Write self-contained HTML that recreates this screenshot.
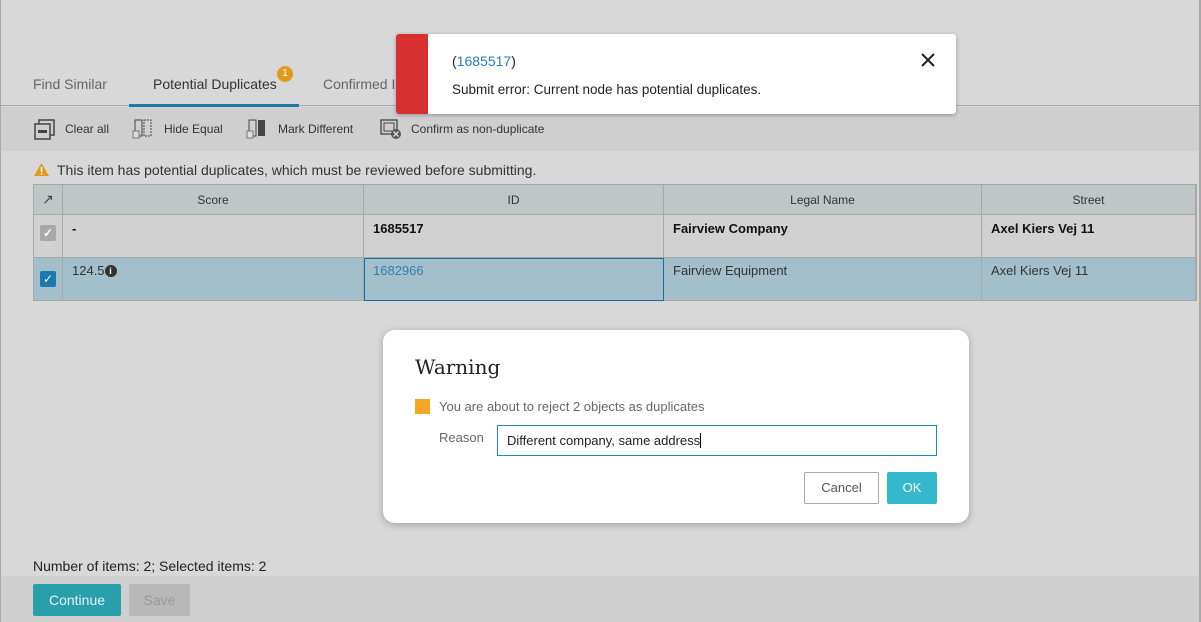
<!DOCTYPE html>
<html><head><meta charset="utf-8"><style>
*{box-sizing:border-box;margin:0;padding:0}
body{width:1201px;height:622px;overflow:hidden;background:#d8d8d8;font-family:"Liberation Sans",sans-serif;font-size:13px;color:#222;position:relative}
.abs{position:absolute}
.tab{position:absolute;top:76px;font-size:14px;color:#666}
.tb{position:absolute;top:122px;font-size:12px;color:#333}
table{border-collapse:collapse;position:absolute;left:33px;top:184px;width:1164px;table-layout:fixed}
td,th{border:1px solid #a8a8a8;vertical-align:top;font-size:13px}
th{background:#bfc6c8;font-weight:normal;height:30px;vertical-align:middle;font-size:12px;color:#333}
.r1 td{background:#d1d1d1;height:43px;padding:6px 9px;font-weight:bold;color:#111}
.r2 td{background:#a3bfcb;height:43px;padding:5px 9px;color:#333}
.cb{width:16px;height:16px;border-radius:2px;display:inline-block;color:#fff;font-size:12px;text-align:center;line-height:16px}
</style></head><body>
<div class="abs" style="left:0;top:0;width:1px;height:622px;background:#a8a8a8;z-index:5"></div>
<div class="abs" style="left:1199px;top:0;width:2px;height:622px;background:#a8a8a8;z-index:5"></div>
<div class="tab" style="left:33px">Find Similar</div>
<div class="tab" style="left:153px;color:#333">Potential Duplicates</div>
<div class="abs" style="left:277px;top:66px;width:16px;height:16px;border-radius:50%;background:#e09a1e;color:#fff;font-size:10px;text-align:center;line-height:16px">1</div>
<div class="tab" style="left:323px">Confirmed I</div>
<div class="abs" style="left:0;top:105px;width:1201px;height:1px;background:#aaa"></div>
<div class="abs" style="left:129px;top:104px;width:170px;height:3px;background:#1a7aa8"></div>
<div class="abs" style="left:0;top:107px;width:1201px;height:44px;background:#cfcfcf"></div>
<svg class="abs" style="left:34px;top:119px" width="22" height="22"><rect x="5" y="1" width="15" height="15" fill="none" stroke="#444" stroke-width="1.5"/><rect x="1" y="5" width="15" height="15" fill="#cfcfcf" stroke="#444" stroke-width="1.5"/><rect x="4" y="11" width="9" height="3" fill="#444"/></svg>
<div class="tb" style="left:65px">Clear all</div>
<svg class="abs" style="left:132px;top:119px" width="22" height="22"><rect x="3" y="1" width="7" height="16" fill="none" stroke="#444"/><rect x="12" y="1" width="7" height="16" fill="none" stroke="#444" stroke-dasharray="2 1"/><rect x="1" y="12" width="6" height="7" fill="#ddd" stroke="#777"/></svg>
<div class="tb" style="left:164px">Hide Equal</div>
<svg class="abs" style="left:246px;top:119px" width="22" height="22"><rect x="3" y="1" width="7" height="16" fill="none" stroke="#444"/><rect x="12" y="1" width="7" height="16" fill="#444"/><rect x="1" y="12" width="6" height="7" fill="#ddd" stroke="#777"/></svg>
<div class="tb" style="left:278px">Mark Different</div>
<svg class="abs" style="left:380px;top:119px" width="24" height="22"><rect x="1" y="1" width="16" height="14" fill="none" stroke="#444" stroke-width="1.3"/><rect x="4" y="4" width="10" height="8" fill="none" stroke="#444"/><circle cx="16" cy="15" r="5" fill="#555"/><path d="M13.5 12.5l5 5M18.5 12.5l-5 5" stroke="#ddd" stroke-width="1.3"/></svg>
<div class="tb" style="left:411px">Confirm as non-duplicate</div>
<svg class="abs" style="left:33px;top:162px" width="17" height="15"><path d="M8.5 1L16 14H1z" fill="#e09a1e"/><rect x="7.8" y="5" width="1.5" height="5" fill="#fff"/><rect x="7.8" y="11" width="1.5" height="1.5" fill="#fff"/></svg>
<div class="abs" style="left:57px;top:162px;font-size:14px;color:#333">This item has potential duplicates, which must be reviewed before submitting.</div>
<table>
<colgroup><col style="width:29px"><col style="width:301px"><col style="width:300px"><col style="width:318px"><col style="width:214px"><col></colgroup>
<tr><th style="font-size:14px;color:#444">&#x2197;</th><th>Score</th><th>ID</th><th>Legal Name</th><th>Street</th><th></th></tr>
<tr class="r1"><td style="padding:10px 6px"><span class="cb" style="background:#a8a8a8">✓</span></td><td>-</td><td>1685517</td><td>Fairview Company</td><td>Axel Kiers Vej 11</td><td></td></tr>
<tr class="r2"><td style="padding:13px 6px"><span class="cb" style="background:#1a7ab0">✓</span></td><td>124.5<span style="display:inline-block;width:12px;height:12px;border-radius:50%;background:#333;color:#fff;font-size:9px;text-align:center;line-height:12px;font-weight:bold;vertical-align:1px">i</span></td><td style="color:#3a7ca8;outline:1px solid #1a6ea0;outline-offset:-1px">1682966</td><td>Fairview Equipment</td><td>Axel Kiers Vej 11</td><td></td></tr>
</table>
<div class="abs" style="left:33px;top:558px;font-size:14px;color:#222">Number of items: 2; Selected items: 2</div>
<div class="abs" style="left:0;top:576px;width:1201px;height:46px;background:#cfcfcf"></div>
<div class="abs" style="left:33px;top:584px;width:88px;height:32px;background:#2a9fac;border-radius:2px;color:#e6f2f3;font-size:14px;text-align:center;line-height:32px">Continue</div>
<div class="abs" style="left:129px;top:584px;width:61px;height:32px;background:#b8b8b8;border-radius:2px;color:#999;font-size:14px;text-align:center;line-height:32px">Save</div>

<div class="abs" style="left:396px;top:34px;width:560px;height:80px;background:#fff;border-radius:3px;box-shadow:0 1px 4px rgba(0,0,0,.3);overflow:hidden">
<div class="abs" style="left:0;top:0;width:32px;height:80px;background:#d63031"></div>
<div class="abs" style="left:56px;top:19px;font-size:14px;color:#222">(<span style="color:#2a7ab8">1685517</span>)</div>
<div class="abs" style="left:56px;top:48px;font-size:13.5px;color:#222">Submit error: Current node has potential duplicates.</div>
<svg class="abs" style="left:524px;top:18px" width="16" height="16"><path d="M2 2L14 14M14 2L2 14" stroke="#222" stroke-width="2"/></svg>
</div>

<div class="abs" style="left:383px;top:330px;width:586px;height:193px;background:#fff;border-radius:12px;box-shadow:0 2px 8px rgba(0,0,0,.25)">
<div class="abs" style="left:32px;top:25px;font-family:'DejaVu Serif','Liberation Serif',serif;font-size:20px;color:#222">Warning</div>
<div class="abs" style="left:32px;top:69px;width:15px;height:15px;background:#f5a623"></div>
<div class="abs" style="left:56px;top:69px;font-size:13px;color:#666">You are about to reject 2 objects as duplicates</div>
<div class="abs" style="left:56px;top:100px;font-size:13px;color:#666">Reason</div>
<div class="abs" style="left:114px;top:95px;width:440px;height:31px;border:1px solid #1a8ac0;font-size:13px;color:#222;padding:7px 9px">Different company, same address<span style="border-left:1px solid #000"></span></div>
<div class="abs" style="left:421px;top:142px;width:75px;height:32px;border:1px solid #aaa;border-radius:2px;font-size:13px;color:#555;text-align:center;line-height:30px">Cancel</div>
<div class="abs" style="left:504px;top:142px;width:50px;height:32px;background:#33b8cc;border-radius:2px;font-size:13px;color:#fff;text-align:center;line-height:32px">OK</div>
</div>
</body></html>
